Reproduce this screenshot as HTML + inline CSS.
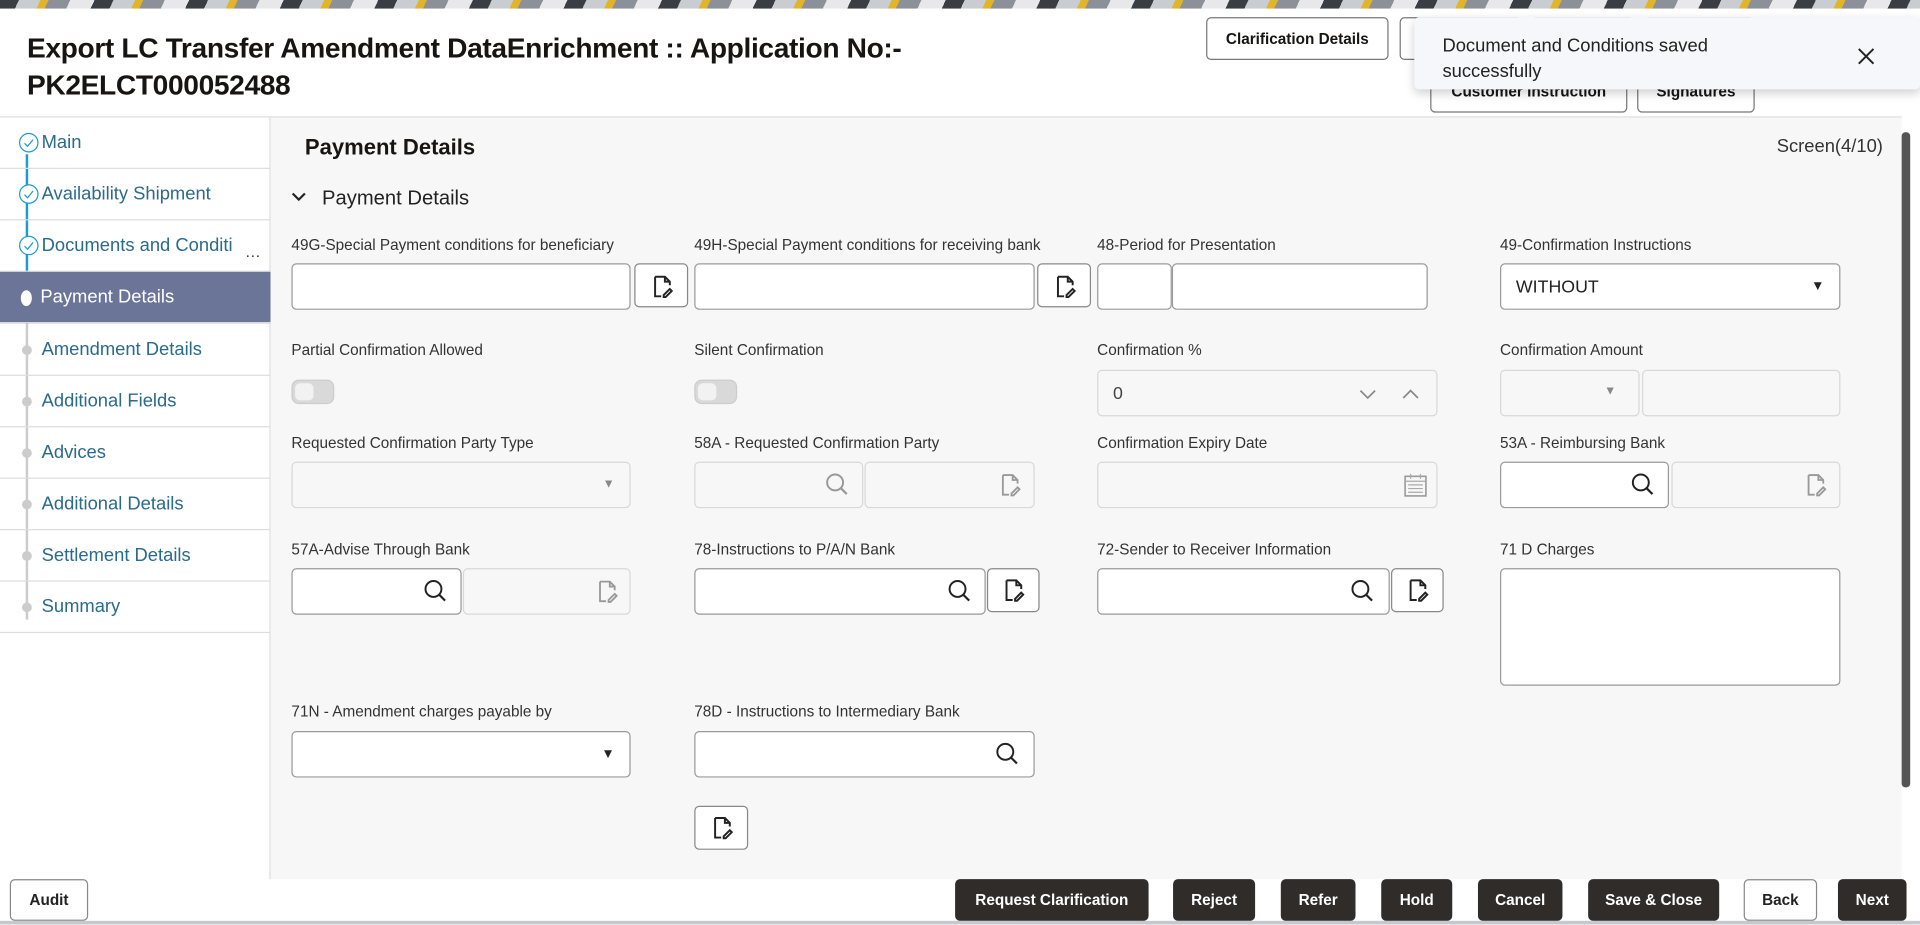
<!DOCTYPE html>
<html><head><meta charset="utf-8">
<style>
*{box-sizing:border-box;margin:0;padding:0}
html,body{width:1920px;height:925px;overflow:hidden;background:#fff;font-family:"Liberation Sans",sans-serif;color:#222}
#w{position:absolute;left:0;top:0;width:1568px;height:755px;transform:scale(1.22449);transform-origin:0 0;overflow:hidden;background:#fff}
.a{position:absolute}
.banner{left:0;top:0;width:1568px;height:7px;background:repeating-linear-gradient(115deg,#3a3d44 0 14px,#c9ccd1 14px 30px,#e0b52b 30px 36px,#8c9099 36px 52px,#e8e8ea 52px 70px)}
.title{left:22px;top:24px;font-size:23px;font-weight:bold;line-height:30px;color:#161513;letter-spacing:-0.3px}
.btn{position:absolute;border:1px solid #777;border-radius:4px;background:#fff;font-size:12.5px;font-weight:bold;display:flex;align-items:center;justify-content:center;color:#161513}
.toast{left:1155px;top:14px;width:413px;height:59px;background:#f5f7fa;border-radius:4px;box-shadow:0 3px 8px rgba(0,0,0,.18);font-size:15px;line-height:21px;padding:13px 0 0 23px;color:#222}
.side{left:0;top:96px;width:221px;height:622px;background:#fff;border-right:1px solid #ddd}
.it{position:absolute;left:0;width:221px;height:42px;border-bottom:1px solid #ddd;font-size:15px;color:#2a6a8c;padding:0 0 0 34px;display:flex;align-items:center}
.content{left:221px;top:96px;width:1332px;height:622px;background:#f7f7f7}
.lbl{position:absolute;font-size:12.5px;color:#333;font-weight:500}
.inp{position:absolute;border:1px solid #9a9a9a;border-radius:4px;background:#fff;height:38px}
.dis{border-color:#d8d8d8;background:#f7f7f7}
.ib{position:absolute;border:1px solid #888;border-radius:4px;background:#fff;width:44px;height:36px}
.ico{position:absolute}
.tog{position:absolute;width:35px;height:20px;border-radius:6px;background:#d9d9d9;border:1px solid #ccc}
.tog:after{content:"";position:absolute;left:2px;top:2px;width:15px;height:14px;border-radius:4px;background:#f2f2f2}
.bb{position:absolute;top:718px;height:34px;border-radius:4px;background:#2f2c29;color:#fff;font-size:12.5px;font-weight:bold;display:flex;align-items:center;justify-content:center}
.bw{background:#fff;color:#222;border:1px solid #888}
</style></head><body><div id="w">
<div class="a banner"></div>
<div class="a title">Export LC Transfer Amendment DataEnrichment :: Application No:-<br>PK2ELCT000052488</div>
<div class="btn" style="left:985px;top:14px;width:149px;height:35px">Clarification Details</div>
<div class="btn" style="left:1143px;top:14px;width:100px;height:35px"></div>
<div class="btn" style="left:1250px;top:14px;width:85px;height:35px"></div>
<div class="btn" style="left:1343px;top:14px;width:90px;height:35px"></div>
<div class="btn" style="left:1168px;top:57px;width:161px;height:35px">Customer Instruction</div>
<div class="btn" style="left:1337px;top:57px;width:96px;height:35px">Signatures</div>
<div class="a toast">Document and Conditions saved<br>successfully<svg style="position:absolute;left:362px;top:25px" width="14" height="14"><path d="M1 1l12 12M13 1L1 13" stroke="#222" stroke-width="1.6"/></svg></div>
<div class="a" style="left:0;top:95px;width:1553px;height:1px;background:#ddd"></div>
<div class="a side">
<div class="a" style="left:21px;top:30px;width:2px;height:100px;background:#1a9ad6"></div>
<div class="a" style="left:21px;top:130px;width:2px;height:280px;background:#ccc"></div>
<div class="it" style="top:0">Main</div>
<div class="it" style="top:42px">Availability Shipment</div>
<div class="it" style="top:84px">Documents and Conditi<span style="position:absolute;left:200px;top:18px;font-size:13px;color:#333">…</span></div>
<div class="it" style="top:126px;background:#6b7597;color:#fff;padding-left:33px">Payment Details</div>
<div class="it" style="top:169px">Amendment Details</div>
<div class="it" style="top:211px">Additional Fields</div>
<div class="it" style="top:253px">Advices</div>
<div class="it" style="top:295px">Additional Details</div>
<div class="it" style="top:337px">Settlement Details</div>
<div class="it" style="top:379px">Summary</div>
<svg class="ico" style="left:15px;top:12px" width="17" height="17"><circle cx="8.5" cy="8.5" r="7.5" fill="#fff" stroke="#1a9ad6"/><path d="M5 9l2.5 2.5L12 6" fill="none" stroke="#1a9ad6"/></svg>
<svg class="ico" style="left:15px;top:54px" width="17" height="17"><circle cx="8.5" cy="8.5" r="7.5" fill="#fff" stroke="#1a9ad6"/><path d="M5 9l2.5 2.5L12 6" fill="none" stroke="#1a9ad6"/></svg>
<svg class="ico" style="left:15px;top:96px" width="17" height="17"><circle cx="8.5" cy="8.5" r="7.5" fill="#fff" stroke="#1a9ad6"/><path d="M5 9l2.5 2.5L12 6" fill="none" stroke="#1a9ad6"/></svg>
<div class="a" style="left:17px;top:141px;width:9px;height:13px;border-radius:50%;background:#fff"></div>
<div class="a" style="left:18px;top:186px;width:8px;height:8px;border-radius:50%;background:#ccc"></div>
<div class="a" style="left:18px;top:228px;width:8px;height:8px;border-radius:50%;background:#ccc"></div>
<div class="a" style="left:18px;top:270px;width:8px;height:8px;border-radius:50%;background:#ccc"></div>
<div class="a" style="left:18px;top:312px;width:8px;height:8px;border-radius:50%;background:#ccc"></div>
<div class="a" style="left:18px;top:354px;width:8px;height:8px;border-radius:50%;background:#ccc"></div>
<div class="a" style="left:18px;top:396px;width:8px;height:8px;border-radius:50%;background:#ccc"></div>
</div>
<div class="a content"></div>
<div class="a" style="left:1553px;top:108px;width:7px;height:535px;background:#555;border-radius:3px"></div>
<div class="a" style="left:249px;top:110px;font-size:18px;font-weight:bold;color:#161513">Payment Details</div>
<div class="a" style="left:1451px;top:111px;font-size:15px;color:#333">Screen(4/10)</div>
<svg class="ico" style="left:238px;top:156px" width="12" height="10"><path d="M1 2l5 5 5-5" fill="none" stroke="#222" stroke-width="1.8"/></svg>
<div class="a" style="left:263px;top:153px;font-size:16.5px;color:#222">Payment Details</div>

<div class="lbl" style="left:238px;top:193px">49G-Special Payment conditions for beneficiary</div>
<div class="lbl" style="left:567px;top:193px">49H-Special Payment conditions for receiving bank</div>
<div class="lbl" style="left:896px;top:193px">48-Period for Presentation</div>
<div class="lbl" style="left:1225px;top:193px">49-Confirmation Instructions</div>
<div class="inp" style="left:238px;top:215px;width:277px"></div>
<div class="ib" style="left:518px;top:215px"></div>
<div class="inp" style="left:567px;top:215px;width:278px"></div>
<div class="ib" style="left:847px;top:215px"></div>
<div class="inp" style="left:896px;top:215px;width:61px"></div>
<div class="inp" style="left:957px;top:215px;width:209px"></div>
<div class="inp" style="left:1225px;top:215px;width:278px"><span style="position:absolute;left:12px;top:11px;font-size:14.5px">WITHOUT</span><span style="position:absolute;right:12px;top:12px;font-size:11px">▼</span></div>

<div class="lbl" style="left:238px;top:279px">Partial Confirmation Allowed</div>
<div class="lbl" style="left:567px;top:279px">Silent Confirmation</div>
<div class="lbl" style="left:896px;top:279px">Confirmation %</div>
<div class="lbl" style="left:1225px;top:279px">Confirmation Amount</div>
<div class="tog" style="left:238px;top:310px"></div>
<div class="tog" style="left:567px;top:310px"></div>
<div class="inp dis" style="left:896px;top:302px;width:278px"><span style="position:absolute;left:12px;top:11px;font-size:14.5px;color:#444">0</span><svg class="ico" style="left:213px;top:13px" width="60" height="12"><path d="M1 3l6 6 6-6M36 9l6-6 6 6" fill="none" stroke="#888" stroke-width="1.4"/></svg></div>
<div class="inp dis" style="left:1225px;top:302px;width:114px"><span style="position:absolute;left:84px;top:11px;font-size:10px;color:#888">▼</span></div>
<div class="inp dis" style="left:1341px;top:302px;width:162px"></div>

<div class="lbl" style="left:238px;top:355px">Requested Confirmation Party Type</div>
<div class="lbl" style="left:567px;top:355px">58A - Requested Confirmation Party</div>
<div class="lbl" style="left:896px;top:355px">Confirmation Expiry Date</div>
<div class="lbl" style="left:1225px;top:355px">53A - Reimbursing Bank</div>
<div class="inp dis" style="left:238px;top:377px;width:277px"><span style="position:absolute;right:12px;top:12px;font-size:10px;color:#888">▼</span></div>
<div class="inp dis" style="left:567px;top:377px;width:138px"></div>
<div class="inp dis" style="left:706px;top:377px;width:139px"></div>
<div class="inp dis" style="left:896px;top:377px;width:278px"></div>
<div class="inp" style="left:1225px;top:377px;width:138px"></div>
<div class="inp dis" style="left:1365px;top:377px;width:138px"></div>

<div class="lbl" style="left:238px;top:442px">57A-Advise Through Bank</div>
<div class="lbl" style="left:567px;top:442px">78-Instructions to P/A/N Bank</div>
<div class="lbl" style="left:896px;top:442px">72-Sender to Receiver Information</div>
<div class="lbl" style="left:1225px;top:442px">71 D Charges</div>
<div class="inp" style="left:238px;top:464px;width:139px"></div>
<div class="inp dis" style="left:378px;top:464px;width:137px"></div>
<div class="inp" style="left:567px;top:464px;width:238px"></div>
<div class="ib" style="left:806px;top:464px;width:43px"></div>
<div class="inp" style="left:896px;top:464px;width:239px"></div>
<div class="ib" style="left:1136px;top:464px;width:43px"></div>
<div class="inp" style="left:1225px;top:464px;width:278px;height:96px"></div>

<div class="lbl" style="left:238px;top:574px">71N - Amendment charges payable by</div>
<div class="lbl" style="left:567px;top:574px">78D - Instructions to Intermediary Bank</div>
<div class="inp" style="left:238px;top:597px;width:277px"><span style="position:absolute;right:12px;top:12px;font-size:11px">▼</span></div>
<div class="inp" style="left:567px;top:597px;width:278px"></div>
<div class="ib" style="left:567px;top:658px;width:44px;height:36px"></div>

<svg class="ico" style="left:674px;top:386px" width="20" height="20"><circle cx="8" cy="8" r="6.5" fill="none" stroke="#999" stroke-width="1.6"/><path d="M12.5 12.5l5 5" stroke="#999" stroke-width="1.8"/></svg>
<svg class="ico" style="left:1332px;top:386px" width="20" height="20"><circle cx="8" cy="8" r="6.5" fill="none" stroke="#222" stroke-width="1.6"/><path d="M12.5 12.5l5 5" stroke="#222" stroke-width="1.8"/></svg>
<svg class="ico" style="left:346px;top:473px" width="20" height="20"><circle cx="8" cy="8" r="6.5" fill="none" stroke="#222" stroke-width="1.6"/><path d="M12.5 12.5l5 5" stroke="#222" stroke-width="1.8"/></svg>
<svg class="ico" style="left:774px;top:473px" width="20" height="20"><circle cx="8" cy="8" r="6.5" fill="none" stroke="#222" stroke-width="1.6"/><path d="M12.5 12.5l5 5" stroke="#222" stroke-width="1.8"/></svg>
<svg class="ico" style="left:1103px;top:473px" width="20" height="20"><circle cx="8" cy="8" r="6.5" fill="none" stroke="#222" stroke-width="1.6"/><path d="M12.5 12.5l5 5" stroke="#222" stroke-width="1.8"/></svg>
<svg class="ico" style="left:813px;top:606px" width="20" height="20"><circle cx="8" cy="8" r="6.5" fill="none" stroke="#222" stroke-width="1.6"/><path d="M12.5 12.5l5 5" stroke="#222" stroke-width="1.8"/></svg>
<svg class="ico" style="left:1146px;top:385px" width="20" height="22"><rect x="1.5" y="4" width="17" height="16" fill="none" stroke="#999" stroke-width="1.3"/><path d="M1.5 8h17M6 2v4M14 2v4M4 11h12M4 14h12M4 17h12" stroke="#aaa" stroke-width="1"/></svg>
<svg class="ico" style="left:531px;top:224px" width="20" height="20"><path d="M4 2h8l4 4v3M4 2v16h5M12 2v4h4M11 17l5-5 1.6 1.6-5 5H11z" fill="none" stroke="#222" stroke-width="1.6"/></svg>
<svg class="ico" style="left:860px;top:224px" width="20" height="20"><path d="M4 2h8l4 4v3M4 2v16h5M12 2v4h4M11 17l5-5 1.6 1.6-5 5H11z" fill="none" stroke="#222" stroke-width="1.6"/></svg>
<svg class="ico" style="left:815px;top:386px" width="20" height="20"><path d="M4 2h8l4 4v3M4 2v16h5M12 2v4h4M11 17l5-5 1.6 1.6-5 5H11z" fill="none" stroke="#999" stroke-width="1.5"/></svg>
<svg class="ico" style="left:1473px;top:386px" width="20" height="20"><path d="M4 2h8l4 4v3M4 2v16h5M12 2v4h4M11 17l5-5 1.6 1.6-5 5H11z" fill="none" stroke="#999" stroke-width="1.5"/></svg>
<svg class="ico" style="left:486px;top:473px" width="20" height="20"><path d="M4 2h8l4 4v3M4 2v16h5M12 2v4h4M11 17l5-5 1.6 1.6-5 5H11z" fill="none" stroke="#999" stroke-width="1.5"/></svg>
<svg class="ico" style="left:818px;top:472px" width="20" height="20"><path d="M4 2h8l4 4v3M4 2v16h5M12 2v4h4M11 17l5-5 1.6 1.6-5 5H11z" fill="none" stroke="#222" stroke-width="1.6"/></svg>
<svg class="ico" style="left:1148px;top:472px" width="20" height="20"><path d="M4 2h8l4 4v3M4 2v16h5M12 2v4h4M11 17l5-5 1.6 1.6-5 5H11z" fill="none" stroke="#222" stroke-width="1.6"/></svg>
<svg class="ico" style="left:580px;top:666px" width="20" height="20"><path d="M4 2h8l4 4v3M4 2v16h5M12 2v4h4M11 17l5-5 1.6 1.6-5 5H11z" fill="none" stroke="#222" stroke-width="1.6"/></svg>

<div class="bb bw" style="left:8px;width:64px">Audit</div>
<div class="bb" style="left:780px;width:158px">Request Clarification</div>
<div class="bb" style="left:958px;width:67px">Reject</div>
<div class="bb" style="left:1046px;width:61px">Refer</div>
<div class="bb" style="left:1128px;width:58px">Hold</div>
<div class="bb" style="left:1207px;width:69px">Cancel</div>
<div class="bb" style="left:1297px;width:107px">Save &amp; Close</div>
<div class="bb bw" style="left:1424px;width:60px">Back</div>
<div class="bb" style="left:1501px;width:56px">Next</div>
<div class="a" style="left:0;top:752px;width:1568px;height:3px;background:#c5c9ce"></div>
</div></body></html>
